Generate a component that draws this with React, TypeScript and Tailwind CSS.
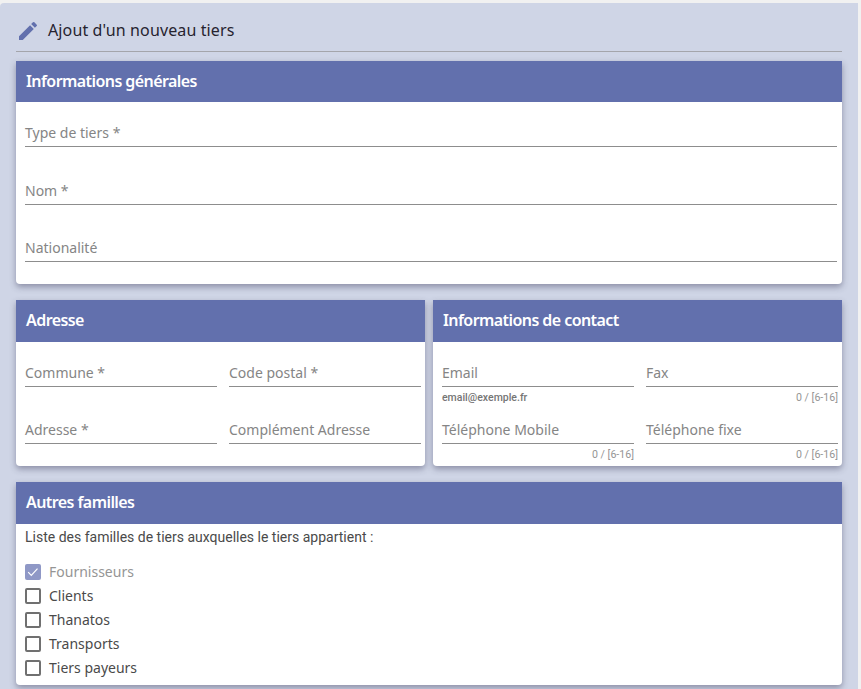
const FAMILLES = ['Fournisseurs', 'Clients', 'Thanatos', 'Transports', 'Tiers payeurs'];

function Field({ label, hint, count, extra = '' }: { label: string; hint?: string; count?: boolean; extra?: string }) {
  return (
    <div className={`relative flex-1 min-w-0 ${extra}`}>
      <div className="h-[45px] flex items-end pb-[3px] border-b border-[#8d8d8d] text-[14px] leading-[20px] text-[#858585] font-['Noto_Sans',sans-serif]">
        {label}
      </div>
      {hint && <div className="absolute left-0 top-[49px] text-[10.5px] leading-[13px] font-medium text-[#757575] font-['Roboto',sans-serif]">{hint}</div>}
      {count && <div className="absolute right-0 top-[49px] text-[10.6px] leading-[13px] text-[#959595] font-['Roboto',sans-serif]">0 / [6-16]</div>}
    </div>
  );
}

function Card({ title, headerH, children, extra = '' }: { title: string; headerH: string; children: React.ReactNode; extra?: string }) {
  return (
    <section className={`bg-white rounded-b-[4px] shadow-[0_3px_6px_rgba(60,60,90,0.45)] ${extra}`}>
      <h2 className={`${headerH} bg-[#6270ad] flex items-center px-[10px] pb-[2px] text-white text-[16px] font-semibold tracking-[-0.57px] font-['Noto_Sans',sans-serif]`}>
        {title}
      </h2>
      {children}
    </section>
  );
}

export default function App() {
  return (
    <div className="w-[861px] h-[689px] overflow-hidden bg-[#f1f1f1] pt-[3px]">
      <div className="h-[686px] w-[858px] bg-[#cfd5e6] rounded-tl-[4px] pl-4 pr-4">
        {/* Titre */}
        <div className="h-[49px] border-b border-[#a4a5ab] flex items-center pl-[2px] pt-[5px]">
          <svg viewBox="0 0 24 24" className="w-[24px] h-[24px] -ml-[2px] mt-[2px] fill-[#6270ad]">
            <path d="M3 17.25V21h3.75L17.81 9.94l-3.75-3.75L3 17.25zM20.71 7.04a1 1 0 0 0 0-1.41l-2.34-2.34a1 1 0 0 0-1.41 0l-1.83 1.83 3.75 3.75 1.83-1.83z" />
          </svg>
          <h1 className="ml-[8px] text-[16px] tracking-[0.12px] text-[#26232f] font-['Noto_Sans',sans-serif]">Ajout d'un nouveau tiers</h1>
        </div>

        <Card title="Informations générales" headerH="h-[41px]" extra="mt-[9px] h-[223px]">
          <div className="px-[9px] pr-[5px] flex flex-col">
            <Field label="Type de tiers *" extra="h-[44px] flex-none" />
            <Field label="Nom *" extra="mt-[14px] flex-none" />
            <Field label="Nationalité" extra="mt-[12px] flex-none" />
          </div>
        </Card>

        <div className="mt-[16px] flex gap-2">
          <Card title="Adresse" headerH="h-[42px]" extra="w-[409px] h-[166px]">
            <div className="pl-[9px] pr-[4px]">
              <div className="flex gap-3">
                <Field label="Commune *" />
                <Field label="Code postal *" />
              </div>
              <div className="flex gap-3 mt-[12px]">
                <Field label="Adresse *" />
                <Field label="Complément Adresse" />
              </div>
            </div>
          </Card>
          <Card title="Informations de contact" headerH="h-[42px]" extra="w-[409px] h-[166px]">
            <div className="pl-[9px] pr-[4px]">
              <div className="flex gap-3">
                <Field label="Email" hint="email@exemple.fr" />
                <Field label="Fax" count />
              </div>
              <div className="flex gap-3 mt-[12px]">
                <Field label="Téléphone Mobile" count />
                <Field label="Téléphone fixe" count />
              </div>
            </div>
          </Card>
        </div>

        <Card title="Autres familles" headerH="h-[42px]" extra="mt-[16px] h-[203px]">
          <p className="pl-[9px] pt-[3px] text-[14px] leading-[20px] text-[#4a4a4a] font-['Roboto',sans-serif]">
            Liste des familles de tiers auxquelles le tiers appartient :
          </p>
          <ul className="pl-[9px] mt-[13px]">
            {FAMILLES.map((f, i) => (
              <li key={f} className="h-[24px] flex items-center gap-2">
                {i === 0 ? (
                  <span className="w-4 h-4 rounded-[2px] bg-[#8f98c6] flex items-center justify-center">
                    <svg viewBox="0 0 16 16" className="w-4 h-4 fill-none stroke-white stroke-[1.2]">
                      <path d="M3.2 8.2l3.1 3.1 6.2-6.6" />
                    </svg>
                  </span>
                ) : (
                  <span className="w-4 h-4 rounded-[2px] border-2 border-[#707070]" />
                )}
                <span className={`text-[14px] leading-[20px] font-['Noto_Sans',sans-serif] ${i === 0 ? 'text-[#959595]' : 'text-[#4a4a4a]'}`}>{f}</span>
              </li>
            ))}
          </ul>
        </Card>
      </div>
    </div>
  );
}
